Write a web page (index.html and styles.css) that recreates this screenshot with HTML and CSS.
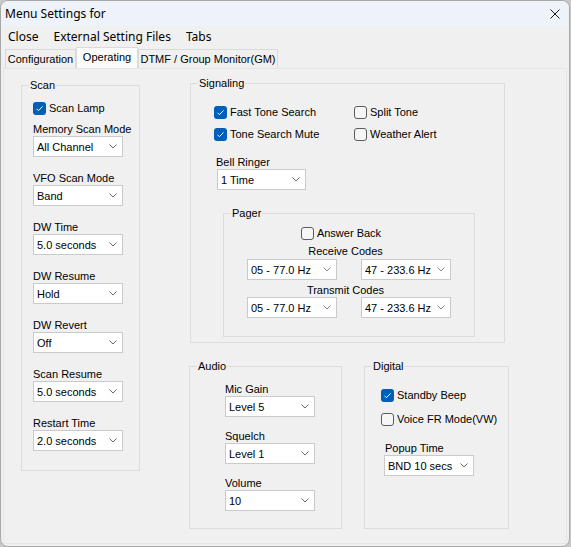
FILE: index.html
```html
<!DOCTYPE html>
<html lang="en">

<head>
    <meta charset="UTF-8">
    <title>Menu Settings for</title>
    <link rel="stylesheet" href="styles.css">
</head>

<body>
    <div class="window">
        <div class="titlebar">
            <span class="title">Menu Settings for</span>
            <svg class="close-x" width="10" height="10" viewBox="0 0 10 10">
                <path d="M0.5 0.5 L9.5 9.5 M9.5 0.5 L0.5 9.5" stroke="#1a1a1a" stroke-width="1" fill="none" />
            </svg>
        </div>
        <div class="menubar">
            <span>Close</span>
            <span>External Setting Files</span>
            <span>Tabs</span>
        </div>
        <div class="tabs">
            <span class="tab tab-config">Configuration</span>
            <span class="tab tab-operating active">Operating</span>
            <span class="tab tab-dtmf">DTMF / Group Monitor(GM)</span>
        </div>

        <div class="page">
            <!-- 左列 Scan -->
            <fieldset class="group scan">
                <legend>Scan</legend>
                <div class="body">
                    <label class="check on"><span class="box"><svg width="13" height="13" viewBox="0 0 13 13"><path d="M3.5 6.8 L5.4 8.7 L9.6 4.4" stroke="#fff" stroke-width="1" fill="none" /></svg></span>Scan Lamp</label>
                    <div class="field">
                        <span class="caption">Memory Scan Mode</span>
                        <div class="combo"><span>All Channel</span><svg width="8" height="5" viewBox="0 0 8 5"><path d="M0.5 0.5 L4 4 L7.5 0.5" stroke="#6b6b6b" fill="none" /></svg></div>
                    </div>
                    <div class="field">
                        <span class="caption">VFO Scan Mode</span>
                        <div class="combo"><span>Band</span><svg width="8" height="5" viewBox="0 0 8 5"><path d="M0.5 0.5 L4 4 L7.5 0.5" stroke="#6b6b6b" fill="none" /></svg></div>
                    </div>
                    <div class="field">
                        <span class="caption">DW Time</span>
                        <div class="combo"><span>5.0 seconds</span><svg width="8" height="5" viewBox="0 0 8 5"><path d="M0.5 0.5 L4 4 L7.5 0.5" stroke="#6b6b6b" fill="none" /></svg></div>
                    </div>
                    <div class="field">
                        <span class="caption">DW Resume</span>
                        <div class="combo"><span>Hold</span><svg width="8" height="5" viewBox="0 0 8 5"><path d="M0.5 0.5 L4 4 L7.5 0.5" stroke="#6b6b6b" fill="none" /></svg></div>
                    </div>
                    <div class="field">
                        <span class="caption">DW Revert</span>
                        <div class="combo"><span>Off</span><svg width="8" height="5" viewBox="0 0 8 5"><path d="M0.5 0.5 L4 4 L7.5 0.5" stroke="#6b6b6b" fill="none" /></svg></div>
                    </div>
                    <div class="field">
                        <span class="caption">Scan Resume</span>
                        <div class="combo"><span>5.0 seconds</span><svg width="8" height="5" viewBox="0 0 8 5"><path d="M0.5 0.5 L4 4 L7.5 0.5" stroke="#6b6b6b" fill="none" /></svg></div>
                    </div>
                    <div class="field">
                        <span class="caption">Restart Time</span>
                        <div class="combo"><span>2.0 seconds</span><svg width="8" height="5" viewBox="0 0 8 5"><path d="M0.5 0.5 L4 4 L7.5 0.5" stroke="#6b6b6b" fill="none" /></svg></div>
                    </div>
                </div>
            </fieldset>

            <!-- 右列 -->
            <div class="right">
                <fieldset class="group signaling">
                    <legend>Signaling</legend>
                    <div class="body">
                        <div class="checks">
                            <label class="check on"><span class="box"><svg width="13" height="13" viewBox="0 0 13 13"><path d="M3.5 6.8 L5.4 8.7 L9.6 4.4" stroke="#fff" stroke-width="1" fill="none" /></svg></span>Fast Tone Search</label>
                            <label class="check"><span class="box"></span>Split Tone</label>
                            <label class="check on"><span class="box"><svg width="13" height="13" viewBox="0 0 13 13"><path d="M3.5 6.8 L5.4 8.7 L9.6 4.4" stroke="#fff" stroke-width="1" fill="none" /></svg></span>Tone Search Mute</label>
                            <label class="check"><span class="box"></span>Weather Alert</label>
                        </div>
                        <div class="field bell">
                            <span class="caption">Bell Ringer</span>
                            <div class="combo"><span>1 Time</span><svg width="8" height="5" viewBox="0 0 8 5"><path d="M0.5 0.5 L4 4 L7.5 0.5" stroke="#6b6b6b" fill="none" /></svg></div>
                        </div>

                        <fieldset class="group pager">
                            <legend>Pager</legend>
                            <div class="body">
                                <label class="check answer"><span class="box"></span>Answer Back</label>
                                <span class="caption receive">Receive Codes</span>
                                <div class="pair">
                                    <div class="combo"><span>05 - 77.0 Hz</span><svg width="8" height="5" viewBox="0 0 8 5"><path d="M0.5 0.5 L4 4 L7.5 0.5" stroke="#8a8a8a" fill="none" /></svg></div>
                                    <div class="combo"><span>47 - 233.6 Hz</span><svg width="8" height="5" viewBox="0 0 8 5"><path d="M0.5 0.5 L4 4 L7.5 0.5" stroke="#8a8a8a" fill="none" /></svg></div>
                                </div>
                                <span class="caption transmit">Transmit Codes</span>
                                <div class="pair">
                                    <div class="combo"><span>05 - 77.0 Hz</span><svg width="8" height="5" viewBox="0 0 8 5"><path d="M0.5 0.5 L4 4 L7.5 0.5" stroke="#8a8a8a" fill="none" /></svg></div>
                                    <div class="combo"><span>47 - 233.6 Hz</span><svg width="8" height="5" viewBox="0 0 8 5"><path d="M0.5 0.5 L4 4 L7.5 0.5" stroke="#8a8a8a" fill="none" /></svg></div>
                                </div>
                            </div>
                        </fieldset>
                    </div>
                </fieldset>

                <div class="lower">
                    <fieldset class="group audio">
                        <legend>Audio</legend>
                        <div class="body">
                            <div class="field">
                                <span class="caption">Mic Gain</span>
                                <div class="combo"><span>Level 5</span><svg width="8" height="5" viewBox="0 0 8 5"><path d="M0.5 0.5 L4 4 L7.5 0.5" stroke="#6b6b6b" fill="none" /></svg></div>
                            </div>
                            <div class="field">
                                <span class="caption">Squelch</span>
                                <div class="combo"><span>Level 1</span><svg width="8" height="5" viewBox="0 0 8 5"><path d="M0.5 0.5 L4 4 L7.5 0.5" stroke="#6b6b6b" fill="none" /></svg></div>
                            </div>
                            <div class="field">
                                <span class="caption">Volume</span>
                                <div class="combo"><span>10</span><svg width="8" height="5" viewBox="0 0 8 5"><path d="M0.5 0.5 L4 4 L7.5 0.5" stroke="#6b6b6b" fill="none" /></svg></div>
                            </div>
                        </div>
                    </fieldset>

                    <fieldset class="group digital">
                        <legend>Digital</legend>
                        <div class="body">
                            <label class="check on"><span class="box"><svg width="13" height="13" viewBox="0 0 13 13"><path d="M3.5 6.8 L5.4 8.7 L9.6 4.4" stroke="#fff" stroke-width="1" fill="none" /></svg></span>Standby Beep</label>
                            <label class="check"><span class="box"></span>Voice FR Mode(VW)</label>
                            <div class="field popup">
                                <span class="caption">Popup Time</span>
                                <div class="combo"><span>BND 10 secs</span><svg width="8" height="5" viewBox="0 0 8 5"><path d="M0.5 0.5 L4 4 L7.5 0.5" stroke="#6b6b6b" fill="none" /></svg></div>
                            </div>
                        </div>
                    </fieldset>
                </div>
            </div>
        </div>
    </div>
</body>

</html>
```

FILE: styles.css
```css
* {
    margin: 0;
    padding: 0;
    box-sizing: border-box;
}

body {
    background-color: #c8c8c8;
    font-family: "Liberation Sans", Arial, sans-serif;
    font-size: 11px;
    color: #000;
}

.window {
    width: 570px;
    height: 547px;
    background-color: #f0f0f0;
    border: 1px solid #a8a8a8;
    border-radius: 8px;
    overflow: hidden;
}

/* 标题栏 */
.titlebar {
    height: 25px;
    background-color: #eef3f9;
    display: flex;
    align-items: center;
    justify-content: space-between;
    padding: 0 9px 0 4px;
    font-family: "Noto Sans", "Open Sans", sans-serif;
    font-size: 12px;
}

.close-x {
    display: block;
}

/* 菜单栏 */
.menubar {
    height: 20px;
    display: flex;
    align-items: center;
    padding-left: 7px;
    font-family: "Noto Sans", "Open Sans", sans-serif;
    font-size: 12px;
}

.menubar span {
    margin-right: 15px;
}

/* 选项卡 */
.tabs {
    height: 22px;
    display: flex;
    align-items: flex-end;
    padding-left: 4px;
}

.tab {
    height: 19px;
    line-height: 18px;
    border: 1px solid #dadada;
    border-bottom: none;
    text-align: center;
}

.tab-config {
    width: 71px;
}

.tab-operating {
    width: 62px;
}

.tab-dtmf {
    width: 140px;
}

.tab.active {
    height: 21px;
    line-height: 19px;
    background-color: #fbfbfb;
}

.page {
    margin-left: 2px;
    width: 564px;
    height: 476px;
    border: 1px solid #e6e6e6;
    display: flex;
    align-items: flex-start;
    padding-left: 17px;
}

/* 分组框 */
.group {
    border: 1px solid #dcdcdc;
    min-width: 0;
}

.group legend {
    margin-left: 7px;
    padding: 0 1px;
    line-height: 14px;
}

.caption {
    display: block;
    line-height: 13px;
}

.combo {
    width: 90px;
    height: 21px;
    background-color: #fff;
    border: 1px solid #cacaca;
    display: flex;
    align-items: center;
    justify-content: space-between;
    padding: 0 5px 0 3px;
}

.combo svg {
    display: block;
}

.check {
    display: flex;
    align-items: center;
    height: 14px;
    white-space: nowrap;
}

.check .box {
    width: 13px;
    height: 13px;
    margin-right: 3px;
    border: 1px solid #5c5c5c;
    border-radius: 3px;
    background-color: #f6f6f6;
}

.check.on .box {
    border: none;
    background-color: #005fb8;
}

.check .box svg {
    display: block;
}

/* Scan */
.scan {
    width: 119px;
    margin-top: 9px;
}

.scan .body {
    display: flex;
    flex-direction: column;
    gap: 15px;
    padding: 9px 0 19px 11px;
}

.scan .check {
    margin-bottom: -7px;
}

/* 右列 */
.right {
    margin-left: 50px;
    margin-top: 7px;
}

.signaling {
    width: 315px;
}

.signaling > .body {
    padding: 15px 0 5px 23px;
}

.checks {
    display: grid;
    grid-template-columns: 140px auto;
    row-gap: 8px;
}

.bell {
    margin-top: 15px;
}

.bell .caption {
    margin-left: 2px;
}

.bell .combo {
    width: 89px;
    margin-left: 3px;
}

.pager {
    width: 252px;
    margin: 16px 0 0 9px;
}

.pager .body {
    width: 204px;
    margin: 0 auto;
    padding: 6px 0 18px;
    display: flex;
    flex-direction: column;
    align-items: center;
}

.pager .answer {
    margin-right: 16px;
}

.pager .caption {
    padding-right: 7px;
}

.pager .receive {
    margin-top: 5px;
    margin-bottom: 1px;
}

.pager .transmit {
    margin-top: 4px;
}

.pair {
    display: flex;
    gap: 24px;
}

.lower {
    display: flex;
    margin-top: 16px;
}

.audio {
    width: 153px;
    margin-left: -1px;
}

.audio .body {
    display: flex;
    flex-direction: column;
    gap: 13px;
    padding: 10px 0 17px 35px;
}

.digital {
    width: 145px;
    margin-left: 22px;
}

.digital .body {
    display: flex;
    flex-direction: column;
    gap: 10px;
    padding: 15px 0 23px 16px;
}

.popup {
    margin-top: 6px;
}

.popup .caption {
    margin-left: 4px;
}

.popup .combo {
    margin-left: 3px;
}
```
